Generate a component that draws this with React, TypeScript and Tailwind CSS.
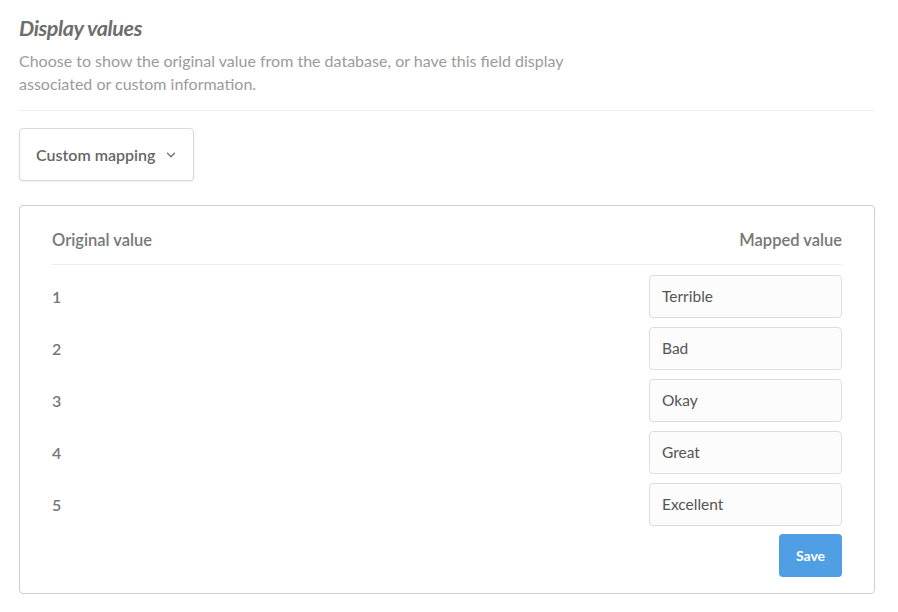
import { ChevronDown } from "lucide-react";

const rows = [
  { original: "1", mapped: "Terrible" },
  { original: "2", mapped: "Bad" },
  { original: "3", mapped: "Okay" },
  { original: "4", mapped: "Great" },
  { original: "5", mapped: "Excellent" },
];

export default function App() {
  return (
    <div className="min-h-screen bg-white px-[19px] pt-[14px] font-['Lato','Noto_Sans',sans-serif] text-[#74838f]">
      <section className="w-[856px]">
        <h2 className="text-[21.5px] font-bold italic leading-[28px] tracking-[-0.4px] text-[#6e6e6e]">
          Display values
        </h2>
        <p className="mt-[7px] max-w-[570px] text-[16px] leading-[23px] text-[#9b9b9b]">
          Choose to show the original value from the database, or have this field display
          associated or custom information.
        </p>
        <div className="mt-[15px] h-px bg-[#f0f0f0]" />

        <button className="mt-[17px] flex h-[53px] w-[175px] items-center gap-[9px] rounded-[4px] border border-[#d9d9d9] bg-white pl-[16px] text-[16px] font-semibold text-[#666] shadow-[0_1px_2px_rgba(0,0,0,0.08)]">
          Custom mapping
          <ChevronDown className="size-[14px] text-[#777]" strokeWidth={2.5} />
        </button>

        <div className="mt-[24px] rounded-[4px] border border-[#cfcfcf] px-[32px] pb-[16px] pt-[23px]">
          <div className="flex items-center justify-between border-b border-[#eeeeee] pb-[13px] text-[16.5px] font-semibold leading-[22px] text-[#777]">
            <span>Original value</span>
            <span>Mapped value</span>
          </div>
          <div className="mt-[10px] flex flex-col gap-[9px]">
            {rows.map((row) => (
              <div key={row.original} className="flex items-center justify-between">
                <span className="text-[16px] font-semibold text-[#777]">{row.original}</span>
                <div className="flex h-[43px] w-[193px] items-center rounded-[4px] border border-[#dcdcdc] bg-[#fcfcfc] px-[12px] text-[15.5px] text-[#555]">
                  {row.mapped}
                </div>
              </div>
            ))}
          </div>
          <div className="mt-[8px] flex justify-end">
            <button className="h-[43px] w-[63px] rounded-[4px] bg-[#509ee3] text-[14px] font-bold text-white">
              Save
            </button>
          </div>
        </div>
      </section>
    </div>
  );
}
